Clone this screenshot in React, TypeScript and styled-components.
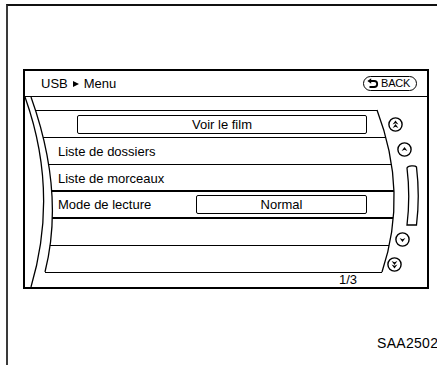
import React from "react";
import styled, { createGlobalStyle } from "styled-components";

const Global = createGlobalStyle`
  html, body { margin: 0; padding: 0; background: #fff; }
  body { font-family: "Liberation Sans", Arial, sans-serif; color: #000; }
  * { box-sizing: border-box; }
`;

const Page = styled.div`
  width: 437px;
  height: 365px;
  overflow: hidden;
  background: #fff;
  padding: 4px 0 0 6px;
`;

const Frame = styled.div`
  height: 361px;
  border-top: 2px solid #111;
  border-left: 2px solid #3a3a3a;
  padding: 63px 0 0 15px;
`;

const Screen = styled.div`
  width: 406px;
  height: 220px;
  border: 2px solid #000;
  display: flex;
  flex-direction: column;
`;

const Header = styled.div`
  height: 26px;
  border-bottom: 1px solid #000;
  display: flex;
  align-items: center;
  justify-content: space-between;
  padding: 0 10px 0 16px;
  font-size: 13px;
`;

const Title = styled.div`
  display: flex;
  align-items: center;
  white-space: nowrap;
`;

const Crumb = styled.span`
  display: inline-block;
  width: 0;
  height: 0;
  border-left: 6px solid #000;
  border-top: 3.5px solid transparent;
  border-bottom: 3.5px solid transparent;
  margin: 0 5px 0 5px;
`;

const BackButton = styled.div`
  height: 15px;
  width: 54px;
  border: 1.5px solid #000;
  border-radius: 8px;
  display: flex;
  align-items: center;
  gap: 2px;
  padding: 0 0 0 3px;
  font-size: 11px;
  letter-spacing: -0.2px;
  line-height: 1;
`;

const Body = styled.div`
  flex: 1;
  display: flex;
  position: relative;
`;

const ListArea = styled.div`
  width: 370px;
  flex-shrink: 0;
  padding-top: 13px;
  display: flex;
  flex-direction: column;
`;

const List = styled.div`
  border-top: 1px solid #000;
  display: flex;
  flex-direction: column;
`;

const Row = styled.div<{ $indent?: number; $selected?: boolean }>`
  height: 27px;
  border-bottom: ${(p) => (p.$selected ? "2px" : "1px")} solid #000;
  box-shadow: ${(p) => (p.$selected ? "0 -2px 0 #000" : "none")};
  display: flex;
  align-items: center;
  padding: 0 28px 0 ${(p) => p.$indent ?? 33}px;
  font-size: 13px;
  white-space: nowrap;
`;

const ValueBox = styled.div<{ $width?: number }>`
  height: 19px;
  border: 1px solid #000;
  border-radius: 2px;
  display: flex;
  align-items: center;
  justify-content: center;
  margin-left: auto;
  flex: ${(p) => (p.$width ? `0 0 ${p.$width}px` : "1")};
  font-size: 13px;
`;

const Footer = styled.div`
  height: 14px;
  line-height: 14px;
  font-size: 13px;
  text-align: right;
  padding-right: 38px;
`;

const Overlay = styled.svg`
  position: absolute;
  left: 0;
  top: 0;
  width: 402px;
  height: 190px;
  pointer-events: none;
  z-index: 1;
`;

const ScrollColumn = styled.div`
  position: relative;
  z-index: 2;
  margin-left: -10px;
  width: 36px;
  padding-top: 20px;
  display: flex;
  flex-direction: column;
  align-items: flex-start;
`;

const Slot = styled.div<{ $x: number; $y: number }>`
  margin-left: ${(p) => p.$x}px;
  margin-top: ${(p) => p.$y}px;
  display: flex;
  line-height: 0;
`;

const Caption = styled.div`
  margin: 46px 0 0 354px;
  font-size: 14px;
  line-height: 16px;
  white-space: nowrap;
  letter-spacing: 0.3px;
`;

const BackIcon = () => (
  <svg width="12" height="11" viewBox="0 0 12 11">
    <path d="M3.2 3 H7.2 A3 3 0 0 1 7.2 9 H2.5" fill="none" stroke="#000" strokeWidth="1.8" />
    <path d="M0.4 3 L4.2 0.2 L4.2 5.8 Z" fill="#000" />
  </svg>
);

const head = (y: number) => `M7.5 ${y} L10.4 ${y + 4} L7.5 ${y + 2.8} L4.6 ${y + 4} Z`;

const CircleArrow = ({ double, down }: { double?: boolean; down?: boolean }) => (
  <svg width="15" height="15" viewBox="0 0 15 15">
    <circle cx="7.5" cy="7.5" r="6.6" fill="#fff" stroke="#000" strokeWidth="1.4" />
    <g transform={down ? "rotate(180 7.5 7.5)" : undefined} fill="#000">
      {double ? (
        <>
          <path d={head(3.4)} />
          <path d={head(7)} />
        </>
      ) : (
        <path d={head(5)} />
      )}
    </g>
  </svg>
);

const ScrollTrack = () => (
  <svg width="14" height="62" viewBox="0 0 14 62">
    <path
      d="M2 3 C3 0.6 10 0.2 11.5 2 Q15 31 11.5 60 L2 60 Q5.5 31 2 3 Z"
      fill="#fff"
      stroke="#000"
      strokeWidth="1.3"
    />
  </svg>
);

export default function App() {
  return (
    <>
      <Global />
      <Page>
        <Frame>
          <Screen>
            <Header>
              <Title>
                USB
                <Crumb />
                Menu
              </Title>
              <BackButton>
                <BackIcon />
                BACK
              </BackButton>
            </Header>
            <Body>
              <ListArea>
                <List>
                  <Row $indent={52}>
                    <ValueBox>Voir le film</ValueBox>
                  </Row>
                  <Row>Liste de dossiers</Row>
                  <Row>Liste de morceaux</Row>
                  <Row $selected>
                    Mode de lecture
                    <ValueBox $width={171}>Normal</ValueBox>
                  </Row>
                  <Row />
                  <Row />
                </List>
                <Footer>1/3</Footer>
              </ListArea>
              <Overlay viewBox="0 0 402 190">
                <path d="M0 0 L6 0 Q40 95 20 175 L20 178 L0 178 Z" fill="#fff" />
                <path d="M352 13 Q383.5 96 357 175 L357 178 L372 178 L372 13 Z" fill="#fff" />
                <path d="M0 0 Q34 95 6 190" fill="none" stroke="#000" strokeWidth="1.3" />
                <path d="M6 0 Q40 95 20 175" fill="none" stroke="#000" strokeWidth="1.3" />
                <path d="M352 13 Q383.5 96 357 175" fill="none" stroke="#000" strokeWidth="1.3" />
              </Overlay>
              <ScrollColumn>
                <Slot $x={3} $y={0}>
                  <CircleArrow double />
                </Slot>
                <Slot $x={12} $y={10}>
                  <CircleArrow />
                </Slot>
                <Slot $x={20} $y={8}>
                  <ScrollTrack />
                </Slot>
                <Slot $x={10} $y={5}>
                  <CircleArrow down />
                </Slot>
                <Slot $x={2} $y={10}>
                  <CircleArrow double down />
                </Slot>
              </ScrollColumn>
            </Body>
          </Screen>
          <Caption>SAA2502</Caption>
        </Frame>
      </Page>
    </>
  );
}
